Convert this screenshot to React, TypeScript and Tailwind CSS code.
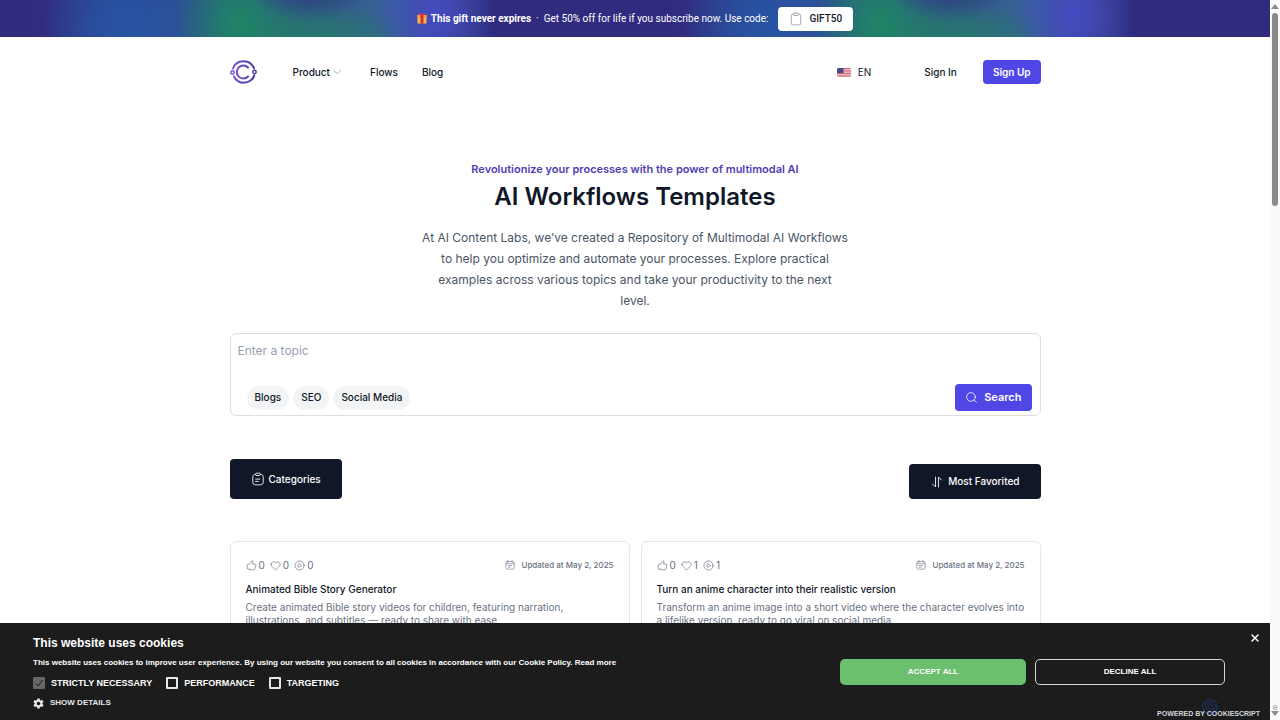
import type { ReactNode } from "react";
import { ChevronDown, Clipboard, Heart, Search, X } from "lucide-react";
import { SiOpenai } from "react-icons/si";

const topics = ["Blogs", "SEO", "Social Media"];

const flows = [
  {
    title: "Animated Bible Story Generator",
    description: [
      "Create animated Bible story videos for children, featuring narration,",
      "illustrations, and subtitles — ready to share with ease.",
    ],
    likes: 0,
    favorites: 0,
    runs: 0,
    updated: "May 2, 2025",
  },
  {
    title: "Turn an anime character into their realistic version",
    description: [
      "Transform an anime image into a short video where the character evolves into",
      "a lifelike version, ready to go viral on social media.",
    ],
    likes: 0,
    favorites: 1,
    runs: 1,
    updated: "May 2, 2025",
  },
];

function Logo() {
  return (
    <svg viewBox="0 0 54 48" className="h-6 w-[27px]" fill="none" strokeLinecap="round">
      <defs>
        <linearGradient id="logo" gradientUnits="userSpaceOnUse" x1="0" y1="0" x2="54" y2="0">
          <stop offset="0" stopColor="#8a56cc" />
          <stop offset="1" stopColor="#4338a8" />
        </linearGradient>
      </defs>
      <g stroke="url(#logo)" strokeWidth="4">
        <path d="M6 17C9 8 17 2.500 27 2.500c8 0 15 4 19 10l2 4" />
        <path d="M8 33c4 8 10 12.500 19 12.500 11 0 20-7 21.500-15" />
        <path d="M36 15a13 13 0 1 0 0 18" />
        <circle cx="5" cy="25" r="3.400" strokeWidth="3" />
        <circle cx="49" cy="24" r="3.400" strokeWidth="3" />
      </g>
    </svg>
  );
}

function Flag() {
  return (
    <svg viewBox="0 0 28 18" className="h-[9px] w-[14px]">
      <clipPath id="flag">
        <rect width="28" height="18" rx="4" />
      </clipPath>
      <g clipPath="url(#flag)">
        <rect width="28" height="18" fill="#e9b8bf" />
        <path d="M0 1h28M0 6h28M0 11h28M0 16h28" stroke="#cf6474" strokeWidth="2.4" />
        <rect width="13" height="10" fill="#474a86" />
      </g>
    </svg>
  );
}

function GiftIcon() {
  return (
    <svg viewBox="0 0 20 22" className="h-[11px] w-[10px]">
      <rect x="1" y="7" width="18" height="14" rx="1" fill="#f7b84b" />
      <rect x="0" y="4" width="20" height="5" rx="1" fill="#f0963a" />
      <rect x="7" y="4" width="6" height="17" fill="#d7303c" />
      <path d="M10 5C6 5 3 3 4 1s5 0 6 4c1-4 5-6 6-4s-2 4-6 4z" fill="#e2394a" />
    </svg>
  );
}

function Icon({ className = "size-[11px]", children }: { className?: string; children: ReactNode }) {
  return (
    <svg
      viewBox="0 0 24 24"
      className={className}
      fill="none"
      stroke="currentColor"
      strokeWidth="1.5"
      strokeLinecap="round"
      strokeLinejoin="round"
    >
      {children}
    </svg>
  );
}

function ThumbIcon() {
  return (
    <Icon>
      <path d="M8 20H5c-1.700 0-2.500-.8-2.500-2.500v-6C2.500 9.800 3.300 9 5 9h3l4.500-6.500c1-1.400 3-.5 2.700 1.200L14.500 9H19c2 0 3 1.300 2.500 3l-2 7c-.4 1.600-1.400 2.500-3 2.500h-4c-2 0-2.600-1.500-4.500-1.500" />
    </Icon>
  );
}

function PlayIcon() {
  return (
    <Icon>
      <circle cx="12" cy="12" r="10" />
      <path d="M9 12V9.800c0-1.500 1.100-2.100 2.400-1.400l3.700 2.200c1.300.8 1.300 2 0 2.800l-3.700 2.200c-1.300.7-2.400.1-2.400-1.400z" />
    </Icon>
  );
}

function CalendarIcon() {
  return (
    <Icon className="size-[10px]">
      <path d="M7 1.500v4M17 1.500v4M2.500 9h19" />
      <rect x="2" y="3.500" width="20" height="18.500" rx="4" />
      <path d="M8 13.500h8M8 17.500h4" />
    </Icon>
  );
}

function CategoriesIcon() {
  return (
    <Icon className="size-[14px]">
      <path d="M8 12.200h7M8 16.200h4.400M10 6h4c2 0 2-1 2-2 0-2-1-2-2-2h-4c-1 0-2 0-2 2s1 2 2 2z" />
      <path d="M16 4c3.300.2 5 1.400 5 6v6c0 4-1 6-6 6H9c-5 0-6-2-6-6v-6c0-4.600 1.700-5.800 5-6" />
    </Icon>
  );
}

function SortIcon() {
  return (
    <Icon className="size-[14px]">
      <path d="M9.500 3.500v17l-5-5M14.500 20.500v-17l5 5" />
    </Icon>
  );
}

function FlowCard({ flow }: { flow: (typeof flows)[number] }) {
  return (
    <article className="h-36 rounded-md border border-gray-200 px-[15px] pt-[15px]">
      <div className="flex h-4 items-center justify-between text-gray-500">
        <div className="flex items-center gap-[5px] text-[10px]">
          <span className="flex items-center gap-0.5"><ThumbIcon />{flow.likes}</span>
          <span className="flex items-center gap-0.5">
            <Heart className="size-[11px]" strokeWidth={1.5} />
            {flow.favorites}
          </span>
          <span className="flex items-center gap-0.5"><PlayIcon />{flow.runs}</span>
        </div>
        <p className="flex items-center gap-1.5 text-[8px] font-medium">
          <CalendarIcon />
          Updated at {flow.updated}
        </p>
      </div>
      <h3 className="mt-2 text-[10px] leading-4 font-medium text-gray-900">{flow.title}</h3>
      <p className="mt-1 text-[10px] leading-[13px] whitespace-nowrap text-gray-500">
        {flow.description[0]}
        <br />
        {flow.description[1]}
      </p>
    </article>
  );
}

function PromoBar() {
  return (
    <div className="flex h-[37px] items-center justify-center bg-[#312b80] bg-[radial-gradient(ellipse_60px_28px_at_310px_-8px,#2c4080_0%,#2c408000_100%),radial-gradient(ellipse_60px_80px_at_435px_14px,#454bc0_0%,#454bc000_100%),radial-gradient(ellipse_65px_80px_at_240px_24px,#208366_10%,#20836600_100%),radial-gradient(ellipse_110px_40px_at_310px_42px,#26796c_10%,#26796c00_100%),radial-gradient(ellipse_80px_90px_at_125px_26px,#2853a5_10%,#2853a500_100%),linear-gradient(90deg,#312b80_5%,#2d4f90_25%,#2f5f82_50%,#38609a_62%,#312b80_77%)] bg-[length:640px_100%] font-['Roboto',sans-serif] text-[10px] text-white">
      <GiftIcon />
      <p className="ml-1">
        <strong className="font-bold">This gift never expires</strong>
        <span className="mx-[5px]">·</span>
        Get 50% off for life if you subscribe now. Use code:
      </p>
      <button className="ml-2.5 flex h-6 items-center gap-1.5 rounded bg-white px-[11px] font-medium text-gray-900">
        <Clipboard className="size-[14px] text-gray-400" strokeWidth={1.5} />
        GIFT50
      </button>
    </div>
  );
}

function Header() {
  return (
    <header className="mx-auto flex h-[70px] w-full max-w-[811px] items-center justify-between text-[10px] font-medium text-gray-900">
      <nav className="flex items-center">
        <a href="#home" aria-label="Home"><Logo /></a>
        <button className="ml-9 flex items-center">
          Product
          <ChevronDown className="size-[14px] text-gray-400" strokeWidth={1.5} />
        </button>
        <a href="#flows" className="ml-[26px]">Flows</a>
        <a href="#blog" className="ml-6">Blog</a>
      </nav>
      <div className="flex items-center">
        <button className="flex items-center gap-[7px] font-normal"><Flag />EN</button>
        <a href="#signin" className="ml-[53px]">Sign In</a>
        <a
          href="#signup"
          className="ml-[26px] flex h-6 items-center rounded bg-[#4f46e5] px-2.5 font-semibold text-white"
        >
          Sign Up
        </a>
      </div>
    </header>
  );
}

function Consent({ label, checked = false }: { label: string; checked?: boolean }) {
  return (
    <label className="flex items-center gap-1.5">
      <span className="grid size-3">
        <input
          type="checkbox"
          defaultChecked={checked}
          disabled={checked}
          className="col-start-1 row-start-1 size-3 appearance-none rounded-[1px] border-2 border-gray-200 disabled:border-[#666] disabled:bg-[#666]"
        />
        {checked && (
          <svg viewBox="0 0 12 12" className="col-start-1 row-start-1 size-3" fill="none">
            <path d="M2.500 6.500 5 9l4.500-6" stroke="#1c1c1c" strokeWidth="1" />
          </svg>
        )}
      </span>
      {label}
    </label>
  );
}

function CookieBanner() {
  return (
    <section
      aria-label="Cookies"
      className="absolute inset-x-0 bottom-0 flex h-[97px] justify-between bg-[#1c1c1c] pl-[33px] font-['Liberation_Sans',Arial,sans-serif] text-white"
    >
      <div className="pt-3">
        <h2 className="text-[12px] leading-4 font-bold">This website uses cookies</h2>
        <p className="mt-1.5 text-[8px] leading-3 font-bold whitespace-nowrap">
          This website uses cookies to improve user experience. By using our website you consent to all
          cookies in accordance with our Cookie Policy. <a href="#policy">Read more</a>
        </p>
        <div className="mt-2 flex items-center gap-[14px] text-[9px] leading-3 font-bold">
          <Consent label="STRICTLY NECESSARY" checked />
          <Consent label="PERFORMANCE" />
          <Consent label="TARGETING" />
        </div>
        <button className="mt-2 flex items-center gap-1.5 text-[8px] leading-3 font-bold text-gray-200">
          <svg viewBox="0 0 24 24" className="size-[11px]" fill="currentColor">
            <path
              fillRule="evenodd"
              d="M9.500 1h5l.7 3.300 2 1.200 3.300-1.100L23 8.600l-2.500 2.300v2.200l2.500 2.300-2.500 4.200-3.300-1.100-2 1.200-.7 3.300h-5l-.7-3.300-2-1.200-3.300 1.100L1 15.400l2.500-2.300v-2.200L1 8.600l2.500-4.200 3.300 1.100 2-1.200zM12 8a4 4 0 1 0 0 8 4 4 0 0 0 0-8z"
            />
          </svg>
          SHOW DETAILS
        </button>
      </div>
      <div className="flex items-center gap-[9px] pr-[45px] text-[8px] font-bold">
        <button className="h-[26px] w-[186px] rounded-[5px] bg-[#6bbf6e]">ACCEPT ALL</button>
        <button className="h-[26px] w-[190px] rounded-[5px] border border-white/80">DECLINE ALL</button>
      </div>
      <button aria-label="Close" className="absolute top-[9px] right-[9px]">
        <X className="size-3" strokeWidth={3} />
      </button>
      <SiOpenai className="absolute right-[52px] bottom-[5px] size-4 text-[#1c3263]" />
      <a href="#cookiescript" className="absolute right-[10px] bottom-0 text-[7px] leading-3 font-bold text-gray-300">
        POWERED BY COOKIESCRIPT
      </a>
    </section>
  );
}

function Scrollbar() {
  return (
    <div className="flex w-[10px] flex-col items-center justify-between bg-[#fafafa] py-1">
      <svg viewBox="0 0 8 5" className="h-[5px] w-2"><path d="M0 5 4 0l4 5z" fill="#8b8b8b" /></svg>
      <div className="mt-1 mb-auto h-[193px] w-1.5 rounded-full bg-[#8b8b8b]" />
      <span className="text-[9px] leading-[9px] text-gray-400">e</span>
      <svg viewBox="0 0 8 5" className="h-[5px] w-2"><path d="M0 0h8L4 5z" fill="#8b8b8b" /></svg>
    </div>
  );
}

export default function App() {
  return (
    <div className="flex h-screen overflow-hidden bg-white font-['Inter',sans-serif]">
      <div className="relative min-w-0 flex-1 overflow-hidden">
        <PromoBar />
        <Header />
        <main className="mx-auto w-full max-w-[811px] pt-[54px]">
          <div className="text-center">
            <p className="text-[11px] leading-4 font-semibold text-[#4f40b5]">
              Revolutionize your processes with the power of multimodal AI
            </p>
            <h1 className="mt-1 text-[24px] leading-8 font-semibold text-gray-900">AI Workflows Templates</h1>
            <p className="mt-[14px] text-[12px] leading-[21px] text-gray-600">
              At AI Content Labs, we’ve created a Repository of Multimodal AI Workflows
              <br />
              to help you optimize and automate your processes. Explore practical
              <br />
              examples across various topics and take your productivity to the next
              <br />
              level.
            </p>
          </div>

          <form className="mt-[22px] rounded-md border border-[#dcdee2] pb-1">
            <textarea
              aria-label="Topic"
              placeholder="Enter a topic"
              className="block h-[50px] w-full resize-none px-[7px] pt-2 text-[12px] leading-[18px] placeholder:text-gray-400"
            />
            <div className="flex items-center justify-between pr-2 pl-4">
              <div className="flex gap-1 text-[10px] font-medium text-gray-900">
                {topics.map((topic) => (
                  <button key={topic} type="button" className="h-6 rounded-full bg-gray-100 px-2">
                    {topic}
                  </button>
                ))}
              </div>
              <button
                type="submit"
                className="flex h-[27px] items-center gap-1.5 rounded bg-[#4f46e5] px-2.5 text-[11px] font-semibold text-white"
              >
                <Search className="size-[13px]" strokeWidth={1.5} />
                Search
              </button>
            </div>
          </form>

          <div className="mt-[43px] flex items-end justify-between text-[10px] font-medium text-white">
            <button className="flex h-10 items-center gap-1 rounded bg-gray-900 px-[21px]">
              <CategoriesIcon />
              Categories
            </button>
            <button className="flex h-[35px] items-center gap-1 rounded bg-gray-900 px-[21px]">
              <SortIcon />
              Most Favorited
            </button>
          </div>

          <div className="mt-[42px] grid grid-cols-2 gap-[11px]">
            {flows.map((flow) => (
              <FlowCard key={flow.title} flow={flow} />
            ))}
          </div>
        </main>
        <CookieBanner />
      </div>
      <Scrollbar />
    </div>
  );
}
